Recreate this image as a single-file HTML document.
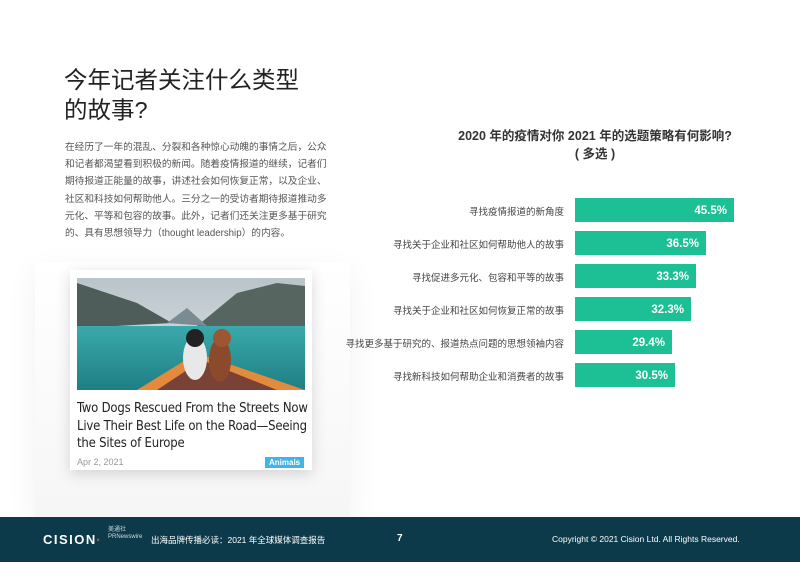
<!DOCTYPE html>
<html><head><meta charset="utf-8"><style>
body{margin:0;width:800px;height:562px;background:#fff;position:relative;overflow:hidden;font-family:"Liberation Sans","Noto Sans CJK SC",sans-serif}
.t{position:absolute;left:64px;top:65px;font-size:23.5px;line-height:30px;color:#222;}
.p{position:absolute;left:65px;top:139px;width:266px;font-size:9.7px;line-height:17.2px;color:#555}
.shadow{position:absolute;left:35px;top:262px;width:315px;height:255px;background:linear-gradient(#fff,#f6f6f6);box-shadow:0 10px 30px rgba(0,0,0,.06)}
.card{position:absolute;left:70px;top:270px;width:242px;height:200px;background:#fff;box-shadow:0 4px 14px rgba(0,0,0,.15)}
.img{position:absolute;left:7px;top:8px;width:228px;height:112px;overflow:hidden}
.ct{position:absolute;left:7px;top:130px;width:232px;font-size:13px;line-height:17.5px;color:#222;font-family:"DejaVu Sans Condensed","Liberation Sans Narrow","Liberation Sans",sans-serif;letter-spacing:-0.2px}
.date{position:absolute;left:7px;top:187px;font-size:9px;color:#999}
.tag{position:absolute;left:195px;top:187px;background:#44b4e4;color:#fff;font-size:8px;font-weight:bold;padding:1px 4px}
.ch{position:absolute;left:420px;top:127px;width:350px;text-align:center;font-size:12.5px;font-weight:bold;color:#333;line-height:18px}
.row{position:absolute;left:330px;height:24px;width:470px}
.lab{position:absolute;right:236px;top:6px;font-size:9.5px;color:#444;white-space:nowrap}
.bar{position:absolute;left:245px;top:0;height:24px;background:#1dbf94;color:#fff;font-weight:bold;font-size:11.5px;text-align:right;line-height:26px;box-sizing:border-box;padding-right:7px}
.foot{position:absolute;left:0;top:517px;width:800px;height:45px;background:#0d3a4b;color:#fff}
</style></head><body>
<div class="t">今年记者关注什么类型<br>的故事?</div>
<div class="p">在经历了一年的混乱、分裂和各种惊心动魄的事情之后，公众和记者都渴望看到积极的新闻。随着疫情报道的继续，记者们期待报道正能量的故事，讲述社会如何恢复正常，以及企业、社区和科技如何帮助他人。三分之一的受访者期待报道推动多元化、平等和包容的故事。此外，记者们还关注更多基于研究的、具有思想领导力（thought leadership）的内容。</div>
<div class="shadow"></div>
<div class="card">
<div class="img">
<svg width="228" height="112" viewBox="0 0 228 112">
<defs><linearGradient id="s" x1="0" y1="0" x2="0" y2="1"><stop offset="0" stop-color="#b9c4ca"/><stop offset="1" stop-color="#dfe5e8"/></linearGradient>
<linearGradient id="w" x1="0" y1="0" x2="0" y2="1"><stop offset="0" stop-color="#3aa9ab"/><stop offset="1" stop-color="#1e7f84"/></linearGradient></defs>
<rect width="228" height="112" fill="url(#s)"/>
<polygon points="0,5 30,15 60,25 95,45 0,50" fill="#4e5d5a"/>
<polygon points="120,48 160,15 200,5 228,8 228,50" fill="#56655f"/>
<polygon points="90,45 110,30 130,48" fill="#7b8b92"/>
<rect x="0" y="48" width="228" height="64" fill="url(#w)"/>
<polygon points="60,112 120,75 228,112" fill="#e48a3c"/>
<polygon points="80,112 125,82 200,112" fill="#7a4236"/>
<ellipse cx="118" cy="80" rx="12" ry="22" fill="#e8e8e8"/>
<ellipse cx="118" cy="60" rx="9" ry="9" fill="#222"/>
<ellipse cx="143" cy="82" rx="11" ry="22" fill="#8b4a2b"/>
<ellipse cx="145" cy="60" rx="9" ry="9" fill="#9c5632"/>
</svg></div>
<div class="ct">Two Dogs Rescued From the Streets Now Live Their Best Life on the Road—Seeing the Sites of Europe</div>
<div class="date">Apr 2, 2021</div>
<div class="tag">Animals</div>
</div>
<div class="ch">2020 年的疫情对你 2021 年的选题策略有何影响?<br>( 多选 )</div>
<div class="row" style="top:198px"><span class="lab">寻找疫情报道的新角度</span><div class="bar" style="width:159px">45.5%</div></div>
<div class="row" style="top:231px"><span class="lab">寻找关于企业和社区如何帮助他人的故事</span><div class="bar" style="width:131px">36.5%</div></div>
<div class="row" style="top:264px"><span class="lab">寻找促进多元化、包容和平等的故事</span><div class="bar" style="width:121px">33.3%</div></div>
<div class="row" style="top:297px"><span class="lab">寻找关于企业和社区如何恢复正常的故事</span><div class="bar" style="width:116px">32.3%</div></div>
<div class="row" style="top:330px"><span class="lab">寻找更多基于研究的、报道热点问题的思想领袖内容</span><div class="bar" style="width:97px">29.4%</div></div>
<div class="row" style="top:363px"><span class="lab">寻找新科技如何帮助企业和消费者的故事</span><div class="bar" style="width:100px">30.5%</div></div>
<div class="foot">
<div style="position:absolute;left:43px;top:15px;font-size:13px;font-weight:bold;letter-spacing:1.5px">CISION<span style="color:#e8743b;font-size:7px">°</span></div>
<div style="position:absolute;left:108px;top:10px;font-size:6px;line-height:7px;color:#cfd8dc">美通社<br>PRNewswire</div>
<div style="position:absolute;left:151px;top:17px;font-size:8.5px">出海品牌传播必读：2021 年全球媒体调查报告</div>
<div style="position:absolute;left:397px;top:16px;font-size:10px;font-weight:bold">7</div>
<div style="position:absolute;left:552px;top:17px;font-size:8.5px">Copyright © 2021 Cision Ltd. All Rights Reserved.</div>
</div>
</body></html>
